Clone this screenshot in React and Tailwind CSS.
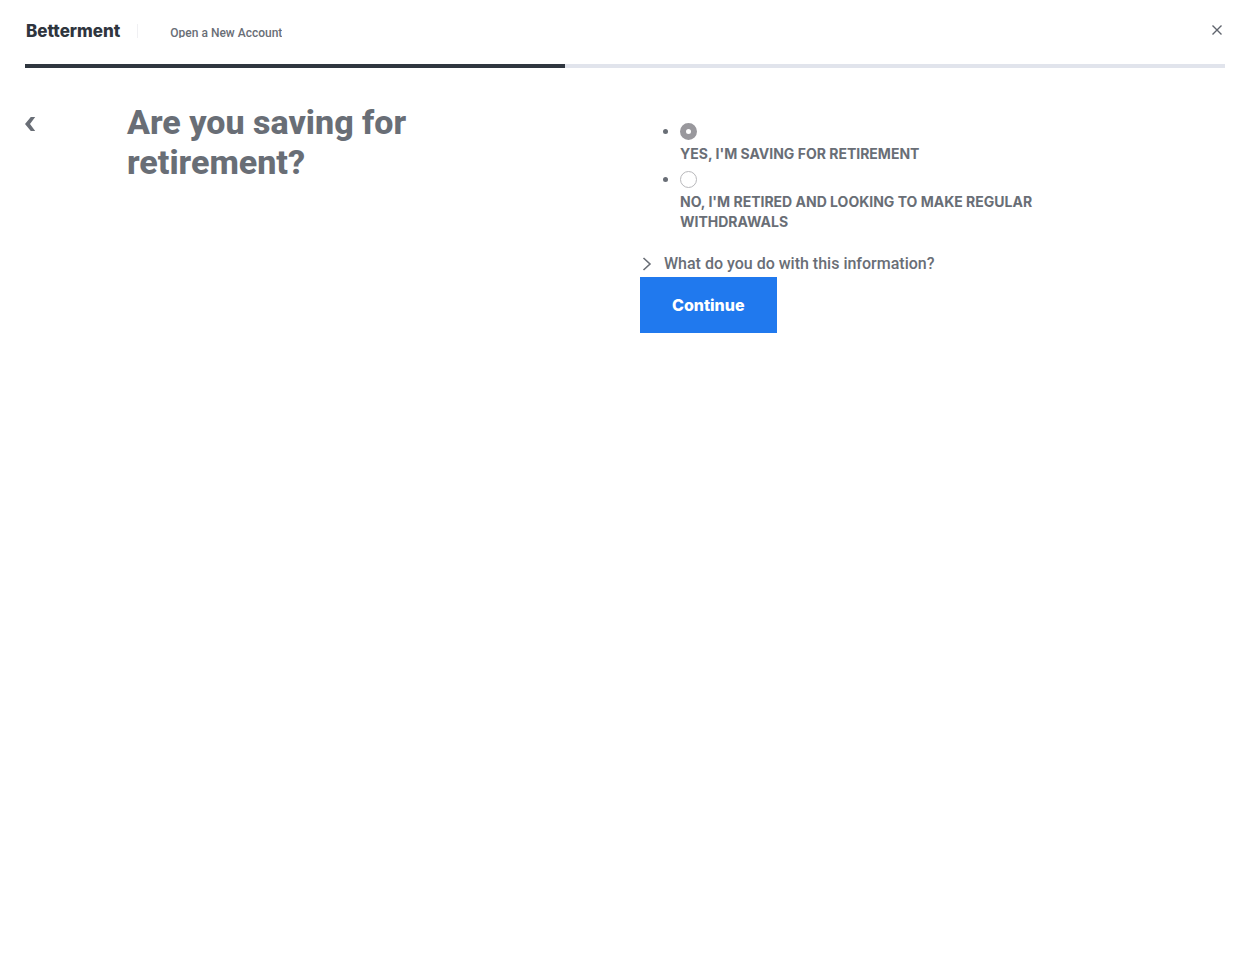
import { useState } from "react";

const OPTIONS = [
  { id: "saving", label: "Yes, I'm saving for retirement" },
  { id: "retired", label: "No, I'm retired and looking to make regular withdrawals" },
];

function Header() {
  return (
    <header className="flex h-16 items-start">
      <a href="#home" className="mt-5 ml-px text-[17px] leading-[22px] font-extrabold text-[#2f353e]">
        Betterment
      </a>
      <div className="mt-6 ml-[17px] h-[14px] overflow-hidden border-l border-[#f0f0f3] pl-8 font-['Roboto',sans-serif] text-xs leading-[18px] font-medium">
        Open a New Account
      </div>
      <button type="button" aria-label="Close" className="mt-6 mr-[2px] ml-auto text-[#5f646d]">
        <svg viewBox="0 0 12 12" className="size-3" fill="none" stroke="currentColor" strokeWidth="1.4">
          <path d="M1.5 1.5 10.5 10.5M10.5 1.5 1.5 10.5" />
        </svg>
      </button>
    </header>
  );
}

function Progress({ percent }) {
  return (
    <div role="progressbar" aria-label="Account setup" aria-valuenow={percent} className="h-1 bg-[#e1e4ec]">
      <div className="h-1 bg-[#2f363f]" style={{ width: `${percent}%` }} />
    </div>
  );
}

function Option({ id, label, checked, onSelect }) {
  return (
    <li className="pb-1 leading-5">
      <input
        id={id}
        type="radio"
        name="status"
        checked={checked}
        onChange={onSelect}
        className="inline-block size-[17px] appearance-none rounded-full border border-[#b8b8bb] bg-white align-middle checked:border-[6px] checked:border-[#99989d]"
      />
      <label htmlFor={id} className="mt-1 block text-sm leading-5 font-bold uppercase">
        {label}
      </label>
    </li>
  );
}

function Disclosure({ title, children }) {
  const [open, setOpen] = useState(false);
  return (
    <div className="mt-4">
      <button
        type="button"
        aria-expanded={open}
        onClick={() => setOpen(!open)}
        className="flex items-center gap-3 pl-[2px] font-['Roboto',sans-serif] text-base leading-6 font-medium"
      >
        <svg viewBox="0 0 10 14" className="h-[14px] w-[10px]" fill="none" stroke="currentColor" strokeWidth="1.6">
          <path d="M1.5 1 8 7 1.5 13" />
        </svg>
        {title}
      </button>
      {open && <p className="py-2 pl-6 text-sm">{children}</p>}
    </div>
  );
}

export default function App() {
  const [selected, setSelected] = useState("saving");
  return (
    <div className="min-h-screen bg-white pr-[31px] pl-[25px] font-['Inter',sans-serif] text-[#696e76]">
      <Header />
      <Progress percent={45} />
      <main className="flex items-start pt-[34px]">
        <button type="button" aria-label="Back" className="mt-[14px] w-[102px] shrink-0">
          <svg viewBox="0 0 11 16" className="h-4 w-[11px]" fill="currentColor">
            <path d="M5.8 1H10.2L5 8 10.2 15H5.8L0 8Z" />
          </svg>
        </button>
        <h1 className="w-[42.75%] shrink-0 pr-40 font-['Roboto',sans-serif] text-[34px] leading-10 font-extrabold">
          Are you saving for retirement?
        </h1>
        <form className="max-w-[410px] flex-1 pt-[18px]" onSubmit={(e) => e.preventDefault()}>
          <ul className="list-disc pl-10">
            {OPTIONS.map((o) => (
              <Option key={o.id} {...o} checked={selected === o.id} onSelect={() => setSelected(o.id)} />
            ))}
          </ul>
          <Disclosure title="What do you do with this information?">
            We use it to recommend a suitable plan.
          </Disclosure>
          <button type="submit" className="mt-px h-14 bg-[#2079ee] px-8 text-base font-extrabold text-white">
            Continue
          </button>
        </form>
      </main>
    </div>
  );
}
